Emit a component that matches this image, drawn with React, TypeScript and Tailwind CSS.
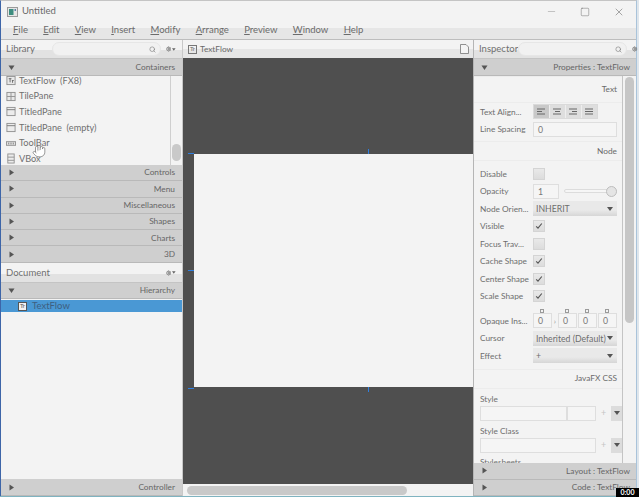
import { Hand, Minus, Square, X, Search, Settings } from "lucide-react";
import type { ReactNode } from "react";

const MENUS = ["File", "Edit", "View", "Insert", "Modify", "Arrange", "Preview", "Window", "Help"];
const CLOSED_LIB = ["Controls", "Menu", "Miscellaneous", "Shapes", "Charts", "3D"];

function Arrow({ open }: { open?: boolean }) {
  return (
    <svg width="7" height="7" viewBox="0 0 7 7" className="shrink-0">
      {open ? <path d="M0.5 1.5h6L3.5 6z" fill="#555" /> : <path d="M1.5 0.5v6L6 3.5z" fill="#555" />}
    </svg>
  );
}

function Bar({ title, open, right, h = "h-[16.3px]" }: { title: ReactNode; open?: boolean; right?: string; h?: string }) {
  return (
    <div className={`flex ${h} shrink-0 items-center justify-between border-b border-[#b9b9b9] bg-[#cfcfcf] pl-[7px] ${right ?? "pr-[7px]"}`}>
      <Arrow open={open} />
      <span className="text-[8.3px] text-[#666666]">{title}</span>
    </div>
  );
}

function PanelHead({ title, search }: { title: string; search?: boolean }) {
  return (
    <div className="relative flex h-[18px] shrink-0 items-center justify-between bg-[linear-gradient(#f3f3f3_0,#f3f3f3_55%,#e2e2e2_55%,#e2e2e2_100%)] pl-[5px] pr-[6px]">
      <span className="text-[9.5px] text-[#6f6f6f]">{title}</span>
      <div className="flex items-center gap-[5px]">
        {search && (
          <div className="flex h-[14px] w-[109px] items-center justify-end rounded-full border border-[#e6e6e6] bg-[#f1f1f1] pr-[4px]">
            <Search size={7} className="text-[#777]" />
          </div>
        )}
        <div className="flex w-[10px] items-center gap-[1px]">
          <Settings size={6} strokeWidth={3} className="text-[#666]" />
          <svg width="4" height="3" viewBox="0 0 4 3"><path d="M0 0h4L2 3z" fill="#666" /></svg>
        </div>
      </div>
    </div>
  );
}

function LibIcon({ kind }: { kind: string }) {
  const c = "#8f8f8f";
  return (
    <svg width="10" height="11" viewBox="0 0 11 11" fill="none" stroke={c} strokeWidth="1" className="shrink-0">
      {kind === "text" && (
        <>
          <rect x="1" y="1" width="9" height="9" fill="#e8e8e8" />
          <path d="M3 3.500h3M4.500 3.500v4M6.500 5.500h2M7.200 5.500v2.500" stroke="#666" />
        </>
      )}
      {kind === "tile" && (
        <>
          <rect x="1" y="1" width="9" height="9" fill="#e8e8e8" />
          <path d="M1 5.500h9M5.500 1v9" />
        </>
      )}
      {kind === "titled" && (
        <>
          <rect x="1" y="1" width="9" height="9" fill="#ececec" />
          <path d="M1 3.500h9" stroke="#777" />
        </>
      )}
      {kind === "tool" && (
        <>
          <rect x="0.5" y="3.500" width="10" height="4" fill="#e4e4e4" />
          <path d="M3 4.500v2M5.500 4.500v2M8 4.500v2" stroke="#777" />
        </>
      )}
      {kind === "vbox" && (
        <>
          <rect x="2" y="0.5" width="7" height="10" fill="#ececec" />
          <path d="M2 4h7M2 7.500h7" />
        </>
      )}
    </svg>
  );
}

const LIB_ITEMS = [
  { kind: "tile", label: "TilePane" },
  { kind: "titled", label: "TitledPane" },
  { kind: "titled", label: "TitledPane  (empty)" },
  { kind: "tool", label: "ToolBar" },
  { kind: "vbox", label: "VBox" },
];

function Label({ children }: { children: ReactNode }) {
  return <span className="w-[53px] shrink-0 whitespace-nowrap text-[8.3px] text-[#6e6e6e]">{children}</span>;
}

function Row({ label, children }: { label: string; children: ReactNode }) {
  return (
    <div className="flex h-[17.5px] shrink-0 items-center gap-0">
      <Label>{label}</Label>
      {children}
    </div>
  );
}

function Section({ title, h = "h-[22px]" }: { title: string; h?: string }) {
  return (
    <div className={`flex ${h} shrink-0 items-center justify-end border-y border-[#ececec] pr-[5px] text-[8.3px] text-[#6a6a6a]`}>
      {title}
    </div>
  );
}

function Check({ on }: { on?: boolean }) {
  return (
    <div className="flex h-[12px] w-[12px] items-center justify-center border border-[#d4d4d4] bg-[linear-gradient(#e9e9e9,#dcdcdc)]">
      {on && (
        <svg width="8" height="8" viewBox="0 0 8 8" fill="none" stroke="#555" strokeWidth="1.1">
          <path d="M1.200 4.300 3 6.200 6.800 1.500" />
        </svg>
      )}
    </div>
  );
}

function Caret() {
  return <svg width="6" height="4" viewBox="0 0 6 4" className="shrink-0"><path d="M0 0h6L3 4z" fill="#555" /></svg>;
}

function Combo({ value }: { value: string }) {
  return (
    <div className="flex h-[15px] w-[84px] items-center justify-between bg-[linear-gradient(#e9e9e9_0,#e9e9e9_60%,#d6d6d6_100%)] pl-[3px] pr-[4px] text-[8.7px] text-[#6d6d6d]">
      <span className="whitespace-nowrap">{value}</span>
      <Caret />
    </div>
  );
}

function Input({ value, className }: { value?: string; className: string }) {
  return (
    <div className={`flex h-[15px] items-center border border-[#dedede] bg-[#f5f5f5] pl-[4px] text-[8.7px] text-[#777] ${className}`}>{value}</div>
  );
}

function AlignIcon({ lines }: { lines: string }) {
  return (
    <svg width="9" height="7" viewBox="0 0 9 7" fill="none" stroke="#666" strokeWidth="1">
      <path d={lines} />
    </svg>
  );
}

function Inspector() {
  return (
    <div className="flex min-h-0 flex-1 overflow-hidden">
      <div className="flex w-[149px] shrink-0 flex-col overflow-hidden border-r border-[#c4c4c4] pl-[6px]">
        <div className="-ml-[6px]">
          <Section title="Text" h="h-[27px]" />
        </div>
        <Row label="Text Align...">
          <div className="flex h-[15px] w-[65px] items-stretch border border-[#dadada] bg-[#dedede]">
            <div className="flex flex-1 items-center justify-center bg-[#c9c9c9]"><AlignIcon lines="M0 1h8M0 3.500h5M0 6h8" /></div>
            <div className="flex flex-1 items-center justify-center border-l border-[#eeeeee]"><AlignIcon lines="M0 1h8M2 3.500h5M0 6h8" /></div>
            <div className="flex flex-1 items-center justify-center border-l border-[#eeeeee]"><AlignIcon lines="M0 1h8M3 3.500h5M0 6h8" /></div>
            <div className="flex flex-1 items-center justify-center border-l border-[#eeeeee]"><AlignIcon lines="M0 1h8M0 3.500h8M0 6h8" /></div>
          </div>
        </Row>
        <Row label="Line Spacing">
          <Input value="0" className="w-[84px]" />
        </Row>
        <div className="-ml-[6px] mt-[3px]">
          <Section title="Node" h="h-[20px]" />
        </div>
        <div className="h-[4px] shrink-0" />
        <Row label="Disable"><Check /></Row>
        <Row label="Opacity">
          <Input value="1" className="w-[26px]" />
          <div className="relative ml-[5px] flex h-[12px] w-[53px] items-center">
            <div className="h-[4px] w-full rounded-full border border-[#dcdcdc] bg-[#f6f6f6]" />
            <div className="absolute right-0 h-[11px] w-[11px] rounded-full border border-[#bdbdbd] bg-[#e4e4e4]" />
          </div>
        </Row>
        <Row label="Node Orien...">
          <Combo value="INHERIT" />
        </Row>
        <Row label="Visible"><Check on /></Row>
        <Row label="Focus Trav..."><Check /></Row>
        <Row label="Cache Shape"><Check on /></Row>
        <Row label="Center Shape"><Check on /></Row>
        <Row label="Scale Shape"><Check on /></Row>
        <div className="flex h-[7px] shrink-0 items-center pl-[60px] pt-[4px]">
          {[0, 1, 2, 3].map((i) => (
            <div key={i} className={`h-[4px] w-[4px] border border-[#9a9a9a] ${i === 0 ? "" : i === 1 ? "ml-[21px]" : "ml-[16px]"}`} />
          ))}
        </div>
        <Row label="Opaque Ins...">
          <Input value="0" className="w-[19px]" />
          <span className="w-[6px] text-center text-[8px] text-[#999]">›</span>
          <Input value="0" className="w-[19px]" />
          <Input value="0" className="ml-[1px] w-[19px]" />
          <Input value="0" className="ml-[1px] w-[19px]" />
        </Row>
        <Row label="Cursor"><Combo value="Inherited (Default)" /></Row>
        <Row label="Effect"><Combo value="+" /></Row>
        <div className="-ml-[6px] mt-[4px]">
          <Section title="JavaFX CSS" h="h-[20px]" />
        </div>
        <div className="mt-[4px] text-[8.3px] leading-[13px] text-[#6e6e6e]">Style</div>
        <div className="flex items-center">
          <Input className="w-[87px]" />
          <Input className="w-[29px]" />
          <span className="w-[15px] text-center text-[9px] text-[#c4c4c4]">+</span>
          <div className="flex h-[15px] w-[11px] items-center justify-center bg-[#dcdcdc]"><Caret /></div>
        </div>
        <div className="mt-[4px] text-[8.3px] leading-[13px] text-[#6e6e6e]">Style Class</div>
        <div className="flex items-center">
          <Input className="w-[116px]" />
          <span className="w-[15px] text-center text-[9px] text-[#c4c4c4]">+</span>
          <div className="flex h-[15px] w-[11px] items-center justify-center bg-[#dcdcdc]"><Caret /></div>
        </div>
        <div className="mt-[3px] text-[8.3px] leading-[13px] text-[#6e6e6e]">Stylesheets</div>
      </div>
      <div className="flex flex-1 justify-center pt-[1px]">
        <div className="h-[246px] w-[9px] rounded-full bg-[#c6c6c6]" />
      </div>
    </div>
  );
}

export default function App() {
  return (
    <div
      className="relative h-[497px] w-[639px] overflow-hidden bg-[#dfe6ec] text-[#6f6f6f]"
      style={{ fontFamily: 'Lato, "Open Sans", sans-serif' }}
    >
      <div className="flex h-[496px] w-[637px] flex-col border-l border-r border-t border-l-[#3d65a8] border-r-[#a9c3da] border-t-[#c4c4c4] bg-[#f3f3f3]">
        {/* title bar */}
        <div className="flex h-[21px] shrink-0 items-center pl-[6px]">
          <svg width="11" height="10" viewBox="0 0 11 10" className="shrink-0">
            <rect x="0.5" y="0.5" width="10" height="9" fill="#e6e6e6" stroke="#9a9a9a" />
            <rect x="2" y="2" width="4.500" height="6" fill="#3d8d7f" />
            <rect x="7.500" y="2" width="1.500" height="2" fill="#5d7fa8" />
          </svg>
          <span className="ml-[4px] text-[9.5px] text-[#6a6a6a]">Untitled</span>
          <div className="ml-auto flex items-center gap-[23px] pr-[11px]">
            <Minus size={11} strokeWidth={1} className="text-[#888]" />
            <Square size={10} strokeWidth={1} className="text-[#555]" />
            <X size={12} strokeWidth={1} className="text-[#555]" />
          </div>
        </div>
        {/* menu bar */}
        <div className="flex h-[18px] shrink-0 items-center gap-[15.3px] border-b border-[#bdbdbd] bg-[linear-gradient(#f3f3f3_0,#f3f3f3_35%,#e6e6e6_35%,#e6e6e6_100%)] pl-[12px] text-[9.5px] text-[#6b6b6b]">
          {MENUS.map((m) => (
            <span key={m}>
              <span className="underline">{m[0]}</span>
              {m.slice(1)}
            </span>
          ))}
        </div>
        {/* three panes */}
        <div className="flex min-h-0 flex-1">
          {/* left */}
          <div className="flex w-[181px] shrink-0 flex-col">
            <PanelHead title="Library" search />
            <div className="border-t border-[#c4c4c4]">
              <Bar title="Containers" open h="h-[17px]" />
            </div>
            <div className="relative h-[89px] shrink-0 overflow-hidden">
              <div className="-mt-[3px] flex flex-col pl-[5px]">
                <div className="flex h-[15.6px] items-center gap-[3px] text-[9.2px] text-[#707070]">
                  <LibIcon kind="text" />
                  <span className="whitespace-pre">TextFlow  (FX8)</span>
                </div>
                {LIB_ITEMS.map((it) => (
                  <div key={it.label} className="flex h-[15.6px] items-center gap-[3px] text-[9.2px] text-[#707070]">
                    <LibIcon kind={it.kind} />
                    <span className="whitespace-pre">{it.label}</span>
                  </div>
                ))}
              </div>
              <div className="absolute bottom-0 left-[169px] top-0 w-px bg-[#cfcfcf]" />
              <div className="absolute left-[171px] top-[68px] h-[17px] w-[9px] rounded-full bg-[#c9c9c9]" />
              <Hand size={14} strokeWidth={1} className="absolute left-[31px] top-[68px] fill-white text-[#555]" />
            </div>
            {CLOSED_LIB.map((t) => (
              <Bar key={t} title={t} />
            ))}
            <div className="h-[1px] shrink-0" />
            <PanelHead title="Document" />
            <div className="border-t border-[#c4c4c4]">
              <Bar title="Hierarchy" open />
            </div>
            <div className="mt-[1px] flex h-[12px] shrink-0 items-center bg-[#4a98d4] pl-[17px]">
              <div className="flex h-[9px] w-[9px] items-center justify-center border border-[#555] bg-[#f2f2f2] text-[6px] leading-none text-[#555]">Tr</div>
              <span className="ml-[5px] text-[9.5px] text-[#3f5f80]">TextFlow</span>
            </div>
            <div className="flex-1" />
            <Bar title="Controller" h="h-[17px]" />
          </div>
          {/* center */}
          <div className="flex min-w-0 flex-1 flex-col border-l border-[#c8c8c8]">
            <div className="flex h-[18px] shrink-0 items-center justify-between bg-[linear-gradient(#f3f3f3_0,#f3f3f3_50%,#e6e6e6_50%,#e6e6e6_100%)] pl-[5px] pr-[4px]">
              <div className="flex items-center gap-[3px]">
                <div className="flex h-[9px] w-[9px] items-center justify-center border border-[#777] text-[6px] leading-none text-[#666]">Tr</div>
                <span className="text-[8.3px] text-[#6a6a6a]">TextFlow</span>
              </div>
              <svg width="9" height="10" viewBox="0 0 9 10" fill="#f5f5f5" stroke="#777" strokeWidth="0.8">
                <path d="M0.5 0.5h5.500l2.500 2.500v6.500h-8z" />
              </svg>
            </div>
            <div className="relative flex min-h-0 flex-1 flex-col bg-[#4f4f4f] pl-[11px] pt-[96px]">
              <div className="h-[233px] w-full bg-[#f3f3f3]" />
              <div className="absolute left-[5px] top-[95px] h-px w-[6px] bg-[#2f7fe0]" />
              <div className="absolute left-[185px] top-[91px] h-[5px] w-px bg-[#2f7fe0]" />
              <div className="absolute left-[5px] top-[212px] h-px w-[6px] bg-[#2f7fe0]" />
              <div className="absolute left-[5px] top-[330px] h-px w-[6px] bg-[#2f7fe0]" />
              <div className="absolute left-[185px] top-[329px] h-[5px] w-px bg-[#2f7fe0]" />
            </div>
            <div className="flex h-[12px] shrink-0 items-center pl-[4px]">
              <div className="h-[9px] w-[220px] rounded-full bg-[#c9c9c9]" />
            </div>
          </div>
          {/* right */}
          <div className="flex w-[163px] shrink-0 flex-col border-l border-[#b5b5b5]">
            <PanelHead title="Inspector" search />
            <div className="border-t border-[#c4c4c4]">
              <Bar title="Properties : TextFlow" open right="pr-[6px]" h="h-[17px]" />
            </div>
            <Inspector />
            <Bar title="Layout : TextFlow" right="pr-[6px]" h="h-[16.5px]" />
            <Bar title="Code : TextFlow" right="pr-[6px]" h="h-[16.5px]" />
          </div>
        </div>
      </div>
      <div className="h-[1px] w-full bg-[#7fb3c0]" />
      <div className="absolute bottom-0 right-0 flex h-[9px] w-[23px] items-center justify-center bg-black text-[7px] font-bold leading-none text-white">0:00</div>
    </div>
  );
}
